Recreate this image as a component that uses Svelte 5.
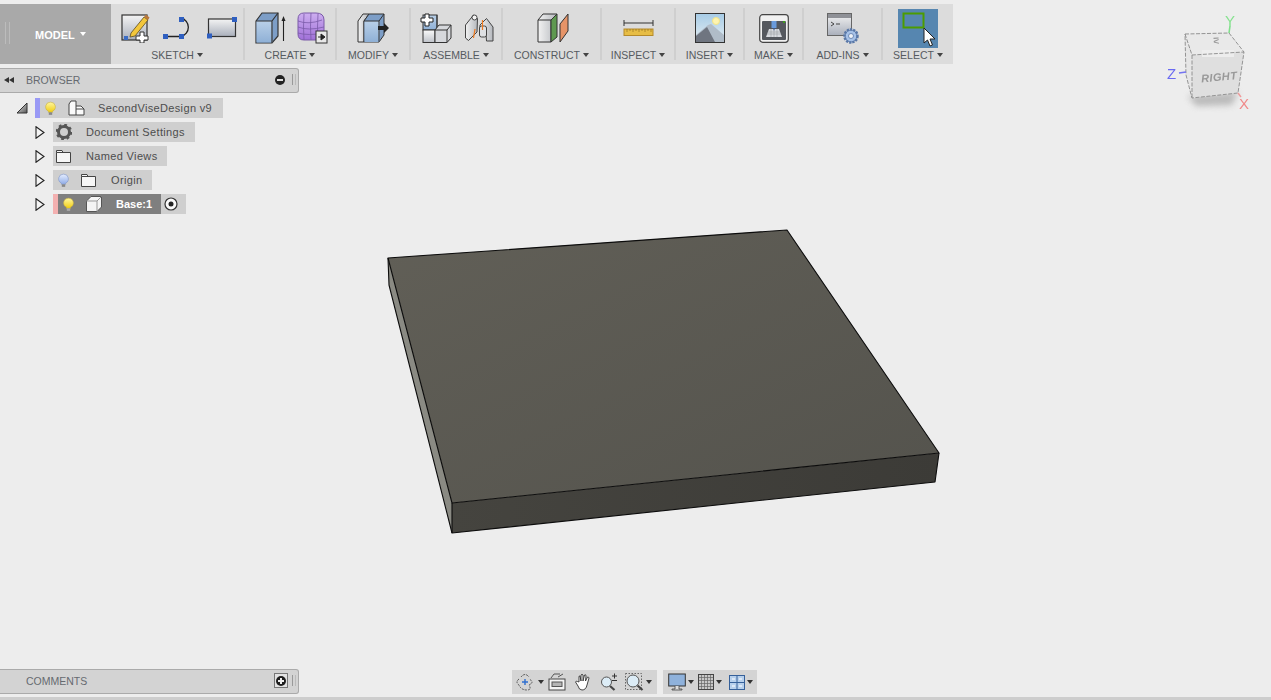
<script>
  const tree = [
    { name: "Document Settings", icon: "gear", w: "w142", gap: "ml14" },
    { name: "Named Views", icon: "folder", w: "w114", gap: "ml15" }
  ];
</script>

<svg class="defs" width="0" height="0" aria-hidden="true">
  <defs>
    <linearGradient id="blue" x1="0" y1="0" x2="0" y2="1"><stop offset="0" stop-color="#b9d0e8"/><stop offset="1" stop-color="#8fb0d6"/></linearGradient>
    <linearGradient id="grey" x1="0" y1="0" x2="0" y2="1"><stop offset="0" stop-color="#fafafa"/><stop offset="1" stop-color="#bfc3ca"/></linearGradient>
    <linearGradient id="sheet" x1="0" y1="0" x2="0" y2="1"><stop offset="0" stop-color="#f4f4f4"/><stop offset="1" stop-color="#a9afbb"/></linearGradient>
    <linearGradient id="side" x1="0" y1="0" x2="1" y2="0"><stop offset="0" stop-color="#f2f2f2"/><stop offset="1" stop-color="#b5b8bd"/></linearGradient>
    <linearGradient id="bulb" x1="0" y1="0" x2="0" y2="1"><stop offset="0" stop-color="#fff7a0"/><stop offset="1" stop-color="#f0cc10"/></linearGradient>
    <linearGradient id="bulboff" x1="0" y1="0" x2="0" y2="1"><stop offset="0" stop-color="#e6eeff"/><stop offset="1" stop-color="#8fabe6"/></linearGradient>
    <linearGradient id="sky" x1="0" y1="0" x2="0" y2="1"><stop offset="0" stop-color="#a7cce6"/><stop offset="1" stop-color="#e6eef2"/></linearGradient>
    <linearGradient id="purple" x1="0" y1="0" x2="0" y2="1"><stop offset="0" stop-color="#cdaef0"/><stop offset="1" stop-color="#a070d8"/></linearGradient>
    <linearGradient id="topface" x1="0" y1="0" x2="1" y2="1"><stop offset="0" stop-color="#615f57"/><stop offset="1" stop-color="#54534d"/></linearGradient>
    <linearGradient id="front" x1="0" y1="0" x2="1" y2="0"><stop offset="0" stop-color="#45443f"/><stop offset="1" stop-color="#3c3b37"/></linearGradient>
    <linearGradient id="arrow" x1="0" y1="0" x2="1" y2="1"><stop offset="0" stop-color="#f0f0f0"/><stop offset="1" stop-color="#555"/></linearGradient>
  </defs>
</svg>

<div class="page">
  <!-- model and view cube sit on the free canvas -->
  <svg class="model" width="1271" height="700" viewBox="0 0 1271 700" aria-hidden="true">
    <polygon points="388,258 452,503 452,533 389,285" fill="#8a8a83"/>
    <polygon points="452,503 939,453 935,482 452,533" fill="url(#front)"/>
    <polygon points="388,258 787,230 939,453 452,503" fill="url(#topface)"/>
    <g fill="none" stroke="#0c0c0c" stroke-width="1.1" stroke-linejoin="round">
      <polygon points="388,258 787,230 939,453 452,503"/>
      <polyline points="939,453 935,482 452,533 452,503"/>
      <polyline points="388,258 389,285 452,533"/>
    </g>
  </svg>

  <svg class="cube" width="100" height="110" viewBox="1160 5 100 110">
    <polygon points="1188,96 1238,92 1232,105 1196,106" fill="#999" opacity=".6" class="blur"/>
    <polygon points="1185,34 1229,33 1244,52 1238,93 1192,98 1186,75" fill="#e6e6e6"/>
    <polygon points="1185,34 1229,33 1244,52 1192,55" fill="#e9e9e9"/>
    <polygon points="1192,55 1244,52 1238,93 1192,98" fill="#dfdfdf"/>
    <rect x="1202" y="50" width="32" height="7" fill="#eeeeee" opacity=".9"/>
    <g fill="none" stroke="#8a8a8a" stroke-width=".9" stroke-dasharray="4 1.5">
      <polygon points="1185,34 1229,33 1244,52 1238,93 1192,98 1186,75"/>
      <polyline points="1185,34 1192,55 1244,52"/>
      <line x1="1192" y1="55" x2="1192" y2="98"/>
    </g>
    <text x="1201" y="81" class="right" transform="rotate(-5 1217 77)">RIGHT</text>
    <text x="1207" y="46" class="top" transform="rotate(176 1213 42)">≥</text>
    <line x1="1229" y1="33" x2="1230" y2="26" stroke="#7fe08a" stroke-width="1.6"/>
    <line x1="1186" y1="72" x2="1179" y2="73" stroke="#7474f0" stroke-width="1.4"/>
    <line x1="1238" y1="93" x2="1241" y2="97" stroke="#f09a9a" stroke-width="1.4"/>
    <text x="1225" y="26" class="axis" fill="#86e28f">Y</text>
    <text x="1167" y="79" class="axis" fill="#6a6af2">Z</text>
    <text x="1239" y="109" class="axis" fill="#f08a8a">X</text>
  </svg>

  <div class="toolbar">
    <div class="mode">
      <span class="grip"></span>
      <span class="modetext">MODEL</span><i class="caret white"></i>
    </div>

    <div class="group">
      <div class="icons sketch">
        <svg width="29" height="30" viewBox="0 0 29 30">
          <rect x="1" y="2" width="25" height="25" fill="url(#sheet)" stroke="#333" stroke-width="1.2"/>
          <path d="M10 20 L23 4 L27 7 L14 23 L9 24 Z" fill="#f3c73c" stroke="#5a4a20" stroke-width=".8"/>
          <path d="M23 4 L25 1.5 L28.5 4.5 L27 7 Z" fill="#b8783c"/>
          <rect x="3" y="23" width="4" height="4" fill="#3b6cc4"/>
          <path d="M19 19 h4 v4 h4 v4 h-4 v3 h-4 v-3 h-4 v-4 h4 z" fill="#fff" stroke="#333"/>
        </svg>
        <svg width="31" height="22" viewBox="0 0 31 22">
          <path d="M2 19.5 H18 A9.5 9.5 0 0 0 18 1 " fill="none" stroke="#222" stroke-width="1.3"/>
          <rect x="0" y="17" width="5" height="5" fill="#2f5fc0"/>
          <rect x="16" y="17" width="5" height="5" fill="#2f5fc0"/>
          <rect x="16" y="0" width="5" height="5" fill="#2f5fc0"/>
        </svg>
        <svg width="30" height="22" viewBox="0 0 30 22">
          <rect x="1.5" y="2" width="27" height="17.5" fill="url(#sheet)" stroke="#333" stroke-width="1.2"/>
          <rect x="25" y="0" width="5" height="5" fill="#2f5fc0"/>
          <rect x="0" y="16.5" width="5" height="5" fill="#2f5fc0"/>
        </svg>
      </div>
      <div class="label">SKETCH<i class="caret"></i></div>
    </div>

    <div class="group">
      <div class="icons create">
        <svg width="32" height="32" viewBox="0 0 32 32">
          <path d="M1 9 L7 1 H23 V24 L17 31 H1 Z" fill="#7d9ec7" stroke="#333" stroke-width="1.2"/>
          <rect x="1.5" y="9" width="16" height="21.5" fill="url(#blue)"/>
          <path d="M1 9 H17 V31 M17 9 L23 1" fill="none" stroke="#333" stroke-width="1.2"/>
          <path d="M28.5 29 V8" stroke="#222" stroke-width="1.1" fill="none"/>
          <path d="M26.5 9 L28.5 4 L30.5 9 Z" fill="#222"/>
        </svg>
        <svg width="31" height="32" viewBox="0 0 31 32">
          <path d="M1 7 Q1 1 7 1 H19 Q27 1 27 8 V22 Q27 28 20 28 H7 Q1 28 1 22 Z" fill="url(#purple)" stroke="#7a5aa8"/>
          <path d="M1 9 Q11 13 25 8 M1 15 Q11 19 27 15 M1 21 Q11 24 27 21 M7 2 Q6 15 7 28 M14 1 Q13 15 14 28 M21 2 Q20 15 21 28" fill="none" stroke="#7a5aa8" stroke-width=".8"/>
          <rect x="19" y="19" width="11" height="12" fill="#e8e8e8" stroke="#333"/>
          <path d="M21 25 H25 M24 22 L28 25 L24 28 Z" stroke="#222" fill="#222"/>
        </svg>
      </div>
      <div class="label">CREATE<i class="caret"></i></div>
    </div>

    <div class="group">
      <div class="icons">
        <svg width="32" height="32" viewBox="0 0 32 32">
          <path d="M1 9 L6 2 H12 L7 9 V30 H1 Z" fill="url(#side)" stroke="#333"/>
          <path d="M7 9 L12 2 H27 V23 L22 30 H7 Z" fill="#7d9ec7" stroke="#333"/>
          <rect x="7.5" y="9" width="15" height="21" fill="url(#blue)"/>
          <path d="M7 9 H22 V30 M22 9 L27 2" fill="none" stroke="#333"/>
          <path d="M21 14 H27 V11 L32 16 L27 21 V18 H21 Z" fill="#222"/>
        </svg>
      </div>
      <div class="label">MODIFY<i class="caret"></i></div>
    </div>

    <div class="group">
      <div class="icons assemble">
        <svg width="32" height="30" viewBox="0 0 32 30">
          <rect x="3" y="2" width="14" height="15" fill="url(#blue)" stroke="#333"/>
          <path d="M17 2 L17 17" stroke="#333"/>
          <rect x="3" y="17" width="12" height="12.5" fill="url(#grey)" stroke="#333"/>
          <path d="M15 17 L19 12 H31 V25 L27 29.5 H15 Z" fill="#d6d8dc" stroke="#333"/>
          <path d="M15 17 H27 V29.5 M27 17 L31 12" fill="none" stroke="#333"/>
          <path d="M5 1 h4 v4 h4 v4 h-4 v4 h-4 v-4 h-4 v-4 h4 z" fill="#fff" stroke="#222"/>
        </svg>
        <svg width="29" height="28" viewBox="0 0 29 28">
          <path d="M.5 11 L8.500 1 L12.500 4.500 L12 18 L3.500 26.500 L.5 24 Z" fill="url(#side)" stroke="#444"/>
          <circle cx="9.500" cy="3.500" r="2.500" fill="#f4f4f4" stroke="#444"/>
          <path d="M15 11 L21.500 4.500 L28 13 V27 H21.500 L21 19 L15 21 Z" fill="url(#side)" stroke="#444"/>
          <rect x="14.500" y="12" width="7" height="11" rx="2" fill="#dfe1e4" stroke="#444"/>
          <path d="M17.500 6 V16 M10 15 L8.500 24" stroke="#f07a1e" stroke-width="1.200" fill="none"/>
        </svg>
      </div>
      <div class="label">ASSEMBLE<i class="caret"></i></div>
    </div>

    <div class="group">
      <div class="icons construct">
        <svg width="32" height="30" viewBox="0 0 32 30">
          <path d="M1 7 L6 1 H20 L14 7 V29 H1 Z" fill="url(#side)" stroke="#333"/>
          <path d="M14 7 L20 1 V24 L14 29 Z" fill="#5f9950" stroke="#333"/>
          <path d="M1 7 H14" stroke="#333"/>
          <path d="M23 11 L31 1 V18 L23 29 Z" fill="#e69468" stroke="#333"/>
        </svg>
      </div>
      <div class="label">CONSTRUCT<i class="caret"></i></div>
    </div>

    <div class="group">
      <div class="icons">
        <svg width="31" height="18" viewBox="0 0 31 18">
          <path d="M1 4 H30 M1 1 V7 M30 1 V7" fill="none" stroke="#333" stroke-width="1"/>
          <rect x="1" y="10" width="29" height="6.5" fill="#e7bd45" stroke="#b58a2a"/>
          <path d="M4 10 V13 M7 10 V12 M10 10 V13 M13 10 V12 M16 10 V13 M19 10 V12 M22 10 V13 M25 10 V12 M28 10 V13" stroke="#8a6a1c" stroke-width=".6"/>
        </svg>
      </div>
      <div class="label">INSPECT<i class="caret"></i></div>
    </div>

    <div class="group">
      <div class="icons">
        <svg width="30" height="30" viewBox="0 0 30 30">
          <rect x=".5" y=".5" width="29" height="29" fill="url(#sky)" stroke="#333"/>
          <circle cx="21" cy="8" r="3.5" fill="#fdf4b0" stroke="#f2e488"/>
          <path d="M1 29 V22 L13 12 L16 11 L29 22 V29 Z" fill="#b0bcc8"/>
          <path d="M1 29 V23 L12 14 L20 29 Z" fill="#6f7580"/>
        </svg>
      </div>
      <div class="label">INSERT<i class="caret"></i></div>
    </div>

    <div class="group">
      <div class="icons">
        <svg width="30" height="29" viewBox="0 0 30 29">
          <rect x=".7" y=".7" width="28.6" height="27.6" rx="3" fill="#f1f1f1" stroke="#444" stroke-width="1.2"/>
          <rect x="3" y="7" width="24" height="19" rx="1" fill="#55585e"/>
          <path d="M7 23 L10 15 H20 L23 23 Z" fill="#d9dbe0"/>
          <path d="M8 20 H22 M9 18 H21 M12 15 V23 M15 15 V23 M18 15 V23" stroke="#8e9097" stroke-width=".5"/>
          <rect x="12.5" y="7" width="5" height="7" fill="#6a9bdc"/>
          <path d="M14 14 L15 17 L16 14 Z" fill="#3a5a90"/>
          <rect x="24" y="7" width="2" height="2" fill="#3f9a20"/>
        </svg>
      </div>
      <div class="label">MAKE<i class="caret"></i></div>
    </div>

    <div class="group">
      <div class="icons">
        <svg width="32" height="31" viewBox="0 0 32 31">
          <rect x=".5" y=".5" width="24" height="22" fill="url(#sheet)" stroke="#666"/>
          <rect x="1" y="1" width="23" height="4" fill="#8f9197"/>
          <path d="M4 9 L7 11 L4 13 M9 11 H13" fill="none" stroke="#333" stroke-width=".9"/>
          <circle cx="24" cy="23" r="6.5" fill="#a7c2e8" stroke="#5a78a8" stroke-width="2.5" stroke-dasharray="2.2 1"/>
          <circle cx="24" cy="23" r="6" fill="none" stroke="#5a78a8" stroke-width=".8"/>
          <circle cx="24" cy="23" r="2.5" fill="#eef2f8" stroke="#5a78a8" stroke-width=".8"/>
        </svg>
      </div>
      <div class="label">ADD-INS<i class="caret"></i></div>
    </div>

    <div class="group last">
      <div class="icons">
        <div class="selectbtn">
          <svg width="40" height="39" viewBox="0 0 40 39">
            <rect x="5.5" y="4.5" width="20" height="14" fill="none" stroke="#4c9c00" stroke-width="2"/>
            <path d="M26 19 L26 34 L29.5 31 L32 37 L34.5 36 L32 30 L37 30 Z" fill="#fff" stroke="#222"/>
          </svg>
        </div>
      </div>
      <div class="label">SELECT<i class="caret"></i></div>
    </div>
  </div>

  <div class="panel browser">
    <span class="rew"><i></i><i></i></span>
    <span class="paneltitle">BROWSER</span>
    <span class="minus"></span>
    <span class="panelgrip"></span>
  </div>

  <div class="tree">
    <div class="treerow">
      <svg class="twist rootarrow" width="12" height="12" viewBox="0 0 12 12"><path d="M1 11 L11 1 V11 Z" fill="url(#arrow)" stroke="#333"/></svg>
      <div class="item w188">
        <span class="stripe purple"></span>
        <svg class="ml5" width="11" height="15" viewBox="0 0 13 17"><path d="M6.5 1 A5.5 5.5 0 0 1 9 11.5 V13 H4 V11.5 A5.5 5.5 0 0 1 6.5 1 Z" fill="url(#bulb)" stroke="#c8b040" stroke-width=".7"/><rect x="4.5" y="13" width="4" height="3" fill="#888"/></svg>
        <svg class="ml12" width="17" height="16" viewBox="0 0 17 16"><path d="M1 4 L3 1 H8 V6 L13 6 L16 9 V15 H1 Z" fill="#fafafa" stroke="#444"/><path d="M8 6 V15 M8 9 H16" stroke="#444" fill="none"/></svg>
        <span class="name ml13">SecondViseDesign v9</span>
      </div>
    </div>

    {#each tree as row}
      <div class="treerow">
        <svg class="twist" width="10" height="13" viewBox="0 0 10 13"><path d="M1 .7 L9 6.5 L1 12.3 Z" fill="#f4f4f4" stroke="#222" stroke-width="1.1"/></svg>
        <div class="item {row.w}">
          {#if row.icon === "gear"}
            <svg class="ml3" width="16" height="16" viewBox="0 0 16 16"><circle cx="8" cy="8" r="5.5" fill="none" stroke="#555" stroke-width="3"/><circle cx="8" cy="8" r="7" fill="none" stroke="#555" stroke-width="2.5" stroke-dasharray="2.7 2.8"/></svg>
          {:else}
            <svg class="ml3" width="15" height="13" viewBox="0 0 15 13"><path d="M.5 2.5 V.5 H6 L7 2.5 H14.5 V12.5 H.5 Z M.5 2.5 H7" fill="#f6f6f6" stroke="#444"/></svg>
          {/if}
          <span class="name {row.gap}">{row.name}</span>
        </div>
      </div>
    {/each}

    <div class="treerow">
      <svg class="twist" width="10" height="13" viewBox="0 0 10 13"><path d="M1 .7 L9 6.5 L1 12.3 Z" fill="#f4f4f4" stroke="#222" stroke-width="1.1"/></svg>
      <div class="item w99">
        <svg class="ml5" width="11" height="15" viewBox="0 0 13 17"><path d="M6.5 1 A5.5 5.5 0 0 1 9 11.5 V13 H4 V11.5 A5.5 5.5 0 0 1 6.5 1 Z" fill="url(#bulboff)" stroke="#7f95c8" stroke-width=".7"/><rect x="4.5" y="13" width="4" height="3" fill="#888"/></svg>
        <svg class="ml12" width="15" height="13" viewBox="0 0 15 13"><path d="M.5 2.5 V.5 H6 L7 2.5 H14.5 V12.5 H.5 Z M.5 2.5 H7" fill="#f6f6f6" stroke="#444"/></svg>
        <span class="name ml15">Origin</span>
      </div>
    </div>

    <div class="treerow">
      <svg class="twist" width="10" height="13" viewBox="0 0 10 13"><path d="M1 .7 L9 6.5 L1 12.3 Z" fill="#f4f4f4" stroke="#222" stroke-width="1.1"/></svg>
      <div class="item w133">
        <span class="stripe pink"></span>
        <div class="selected">
          <svg class="ml5" width="11" height="15" viewBox="0 0 13 17"><path d="M6.5 1 A5.5 5.5 0 0 1 9 11.5 V13 H4 V11.5 A5.5 5.5 0 0 1 6.5 1 Z" fill="url(#bulb)" stroke="#c8b040" stroke-width=".7"/><rect x="4.5" y="13" width="4" height="3" fill="#aaa"/></svg>
          <svg class="ml12" width="16" height="16" viewBox="0 0 16 16"><path d="M.5 5 L5 .5 H15.5 V11 L11 15.5 H.5 Z" fill="#f4f4f4" stroke="#555"/><path d="M.5 5 H11 V15.5 M11 5 L15.5 .5" fill="none" stroke="#999"/></svg>
          <span class="name bold">Base:1</span>
        </div>
        <svg class="ml3" width="14" height="14" viewBox="0 0 14 14"><circle cx="7" cy="7" r="6" fill="#fafafa" stroke="#333" stroke-width="1.2"/><circle cx="7" cy="7" r="2.5" fill="#222"/></svg>
      </div>
    </div>
  </div>

  <div class="bottom">
    <div class="panel comments">
      <span class="paneltitle">COMMENTS</span>
      <span class="plusbox"><span class="plus"></span></span>
      <span class="panelgrip"></span>
    </div>

    <div class="nav">
      <div class="navgroup w145">
        <svg width="21" height="20" viewBox="0 0 21 20"><path d="M6 5 Q10 0 14 5 M4 7 Q0 10 4 13 Q6 18 12 18 Q17 18 14 13 Q20 10 14 7" fill="none" stroke="#555" stroke-dasharray="2 1"/><path d="M10 7 V13 M7 10 H13" stroke="#2f6fd0" stroke-width="1.4"/></svg>
        <i class="caret dark"></i>
        <svg class="ml4" width="18" height="18" viewBox="0 0 18 18"><path d="M3 5 L6 1 H12 M10 4 L15 1" fill="none" stroke="#555"/><rect x="1" y="6" width="16" height="11" fill="#f5f5f5" stroke="#444"/><rect x="4" y="9" width="10" height="4.5" fill="#b5b5b5" stroke="#555"/></svg>
        <svg class="ml8" width="18" height="18" viewBox="0 0 18 18"><path d="M5 9 V4 Q5 2.5 6 3 L7 8 V2 Q8 .5 9 2 V8 L10.5 2 Q12 1 12 3 L11.5 8 L13.5 4 Q15 4 15 5 L13 12 Q12 17 8 17 Q5 17 4 13 L1.5 9 Q2 7.5 3.5 8.5 Z" fill="#fff" stroke="#333" stroke-width=".9"/></svg>
        <svg class="ml8" width="18" height="18" viewBox="0 0 18 18"><circle cx="6.5" cy="9" r="5" fill="#dcecf6" stroke="#555"/><path d="M10 13 L14.5 17" stroke="#444" stroke-width="2.2"/><path d="M12 3 H17 M14.5 .5 V5.5 M12 7.5 H17" stroke="#333"/></svg>
        <svg class="ml7" width="19" height="18" viewBox="0 0 19 18"><rect x=".5" y=".5" width="16" height="16" fill="none" stroke="#666" stroke-dasharray="1.5 1.5"/><circle cx="8" cy="8" r="6" fill="#dcecf6" stroke="#555"/><path d="M12.5 12.5 L17.5 17" stroke="#444" stroke-width="2.2"/></svg>
        <i class="caret dark"></i>
      </div>
      <div class="navgroup w94">
        <svg width="18" height="18" viewBox="0 0 18 18"><rect x=".7" y="1" width="16.6" height="12" fill="#8fb2dc" stroke="#333" stroke-width="1"/><path d="M7 13 V16 H4 V17 H14 V16 H11 V13" fill="#ddd" stroke="#444" stroke-width=".8"/></svg>
        <i class="caret dark"></i>
        <svg class="ml4" width="16" height="16" viewBox="0 0 16 16"><rect x=".5" y=".5" width="15" height="15" fill="#c8c8c8" stroke="#444"/><path d="M3.5 1 V15 M6.5 1 V15 M9.5 1 V15 M12.5 1 V15 M1 3.5 H15 M1 6.5 H15 M1 9.5 H15 M1 12.5 H15" stroke="#666" stroke-width=".7"/></svg>
        <i class="caret dark"></i>
        <svg class="ml7" width="16" height="15" viewBox="0 0 16 15"><rect x=".5" y=".5" width="15" height="14" fill="#b7d0ec" stroke="#35609a"/><path d="M8 1 V14 M1 7.5 H15" stroke="#35609a" stroke-width="1"/><path d="M3 4 H6 M10 4 H13 M3 11 H6 M10 11 H13" stroke="#e8f0fa" stroke-width="1.5"/></svg>
        <i class="caret dark"></i>
      </div>
    </div>
  </div>

  <div class="strip"></div>
</div>

<style>
  :global(body) {
    margin: 0;
    background: #ededed;
  }

  .defs {
    position: absolute;
  }

  .page {
    position: relative;
    width: 1271px;
    height: 700px;
    overflow: hidden;
    display: flex;
    flex-direction: column;
    background: #ededed;
    font-family: "Liberation Sans", Arial, sans-serif;
    color: #555;
  }

  .model {
    position: absolute;
    left: 0;
    top: 0;
  }

  .cube {
    position: absolute;
    left: 1160px;
    top: 5px;
    filter: blur(0.4px);
  }

  .blur {
    filter: blur(3px);
  }

  .right {
    font: italic bold 11px "Liberation Sans", sans-serif;
    fill: #999;
    letter-spacing: 0.4px;
  }

  .top {
    font: bold 10px "Liberation Sans", sans-serif;
    fill: #999;
  }

  .axis {
    font: 15px "Liberation Sans", sans-serif;
  }

  .toolbar {
    position: relative;
    display: grid;
    grid-template-columns: 111px 134px 92px 74px 92px 99px 74px 69px 59px 79px 70px;
    width: 953px;
    height: 60px;
    margin-top: 4px;
    background: #dcdcdc;
  }

  .mode {
    position: relative;
    display: flex;
    align-items: center;
    padding-left: 35px;
    background: #a9a9a9;
  }

  .grip {
    position: absolute;
    left: 5px;
    top: 18px;
    width: 3px;
    height: 22px;
    border-left: 1px solid #bcbcbc;
    border-right: 1px solid #bcbcbc;
  }

  .modetext {
    color: #fff;
    font-size: 11px;
    font-weight: bold;
    margin-top: 2px;
  }

  .caret {
    display: inline-block;
    flex: none;
    width: 0;
    height: 0;
    margin-left: 3px;
    border-left: 3px solid transparent;
    border-right: 3px solid transparent;
    border-top: 4px solid #444;
  }

  .caret.white {
    border-top-color: #fff;
    margin-left: 5px;
  }

  .caret.dark {
    margin-left: 2px;
    border-top-color: #333;
  }

  .group {
    display: flex;
    flex-direction: column;
    height: 52px;
    margin-top: 4px;
    box-sizing: border-box;
    border-right: 2px solid #cfcfcf;
  }

  .group.last {
    border-right: 0;
  }

  .icons {
    display: flex;
    flex: none;
    align-items: center;
    justify-content: center;
    height: 40px;
  }

  .sketch {
    gap: 13px;
    padding-left: 3px;
  }

  .create {
    gap: 10px;
    padding-left: 2px;
  }

  .assemble {
    gap: 13px;
    padding-left: 2px;
  }

  .construct {
    padding-left: 3px;
  }

  .selectbtn {
    display: flex;
    width: 40px;
    height: 39px;
    background: #5686b0;
  }

  .label {
    display: flex;
    flex: none;
    align-items: center;
    justify-content: center;
    height: 14px;
    font-size: 10.5px;
    color: #555a60;
  }

  .panel {
    position: relative;
    display: flex;
    align-items: center;
    width: 299px;
    height: 25px;
    padding-bottom: 2px;
    box-sizing: border-box;
    background: #d3d3d3;
    border: 1px solid #aaa;
    border-left: 0;
    border-radius: 0 3px 3px 0;
  }

  .browser {
    margin-top: 4px;
  }

  .rew {
    display: flex;
    margin-left: 4px;
    width: 22px;
  }

  .rew i {
    width: 0;
    height: 0;
    border-top: 3px solid transparent;
    border-bottom: 3px solid transparent;
    border-right: 5px solid #333;
  }

  .paneltitle {
    font-size: 10.5px;
    color: #666a70;
  }

  .minus {
    position: relative;
    width: 10px;
    height: 10px;
    margin-left: auto;
    margin-right: 7px;
    border-radius: 50%;
    background: #222;
  }

  .minus::after {
    content: "";
    position: absolute;
    left: 2px;
    top: 4px;
    width: 6px;
    height: 2px;
    background: #ddd;
  }

  .panelgrip {
    width: 2px;
    height: 11px;
    margin-right: 2px;
    border-left: 1px solid #999;
    border-right: 1px solid #bbb;
  }

  .tree {
    position: relative;
    display: flex;
    flex-direction: column;
    gap: 4px;
    margin-top: 5px;
  }

  .treerow {
    position: relative;
    display: flex;
    align-items: center;
    height: 20px;
    padding-left: 35px;
  }

  .twist {
    flex: none;
    width: 10px;
    margin-right: 8px;
  }

  .rootarrow {
    position: absolute;
    left: 16px;
    width: 12px;
    margin: 0;
  }

  .item {
    display: flex;
    align-items: center;
    height: 20px;
    flex: none;
    background: #cfcfcf;
  }

  .w188 { width: 188px; }
  .w142 { width: 142px; }
  .w114 { width: 114px; }
  .w99 { width: 99px; }
  .w133 { width: 133px; }
  .w145 { width: 145px; }
  .w94 { width: 94px; }

  .ml3 { margin-left: 3px; }
  .ml4 { margin-left: 4px; }
  .ml5 { margin-left: 5px; }
  .ml7 { margin-left: 7px; }
  .ml8 { margin-left: 8px; }
  .ml12 { margin-left: 12px; }
  .ml13 { margin-left: 13px; }
  .ml14 { margin-left: 14px; }
  .ml15 { margin-left: 15px; }

  .stripe {
    width: 5px;
    height: 20px;
    flex: none;
  }

  .purple {
    background: #9999f5;
  }

  .pink {
    background: #f3b0b0;
  }

  .selected {
    display: flex;
    align-items: center;
    width: 103px;
    height: 20px;
    background: #7f7f7f;
  }

  .name {
    font-size: 11px;
    letter-spacing: 0.35px;
    color: #4d4d4d;
    white-space: nowrap;
  }

  .bold {
    margin-left: 14px;
    color: #fff;
    font-weight: bold;
    letter-spacing: 0;
  }

  .bottom {
    display: flex;
    align-items: flex-start;
    margin-top: auto;
  }

  .comments {
    padding-left: 26px;
  }

  .plusbox {
    display: flex;
    align-items: center;
    justify-content: center;
    width: 14px;
    height: 15px;
    margin-left: auto;
    margin-right: 4px;
    border: 1px solid #777;
    box-sizing: border-box;
    background: #e2e2e2;
  }

  .plus {
    position: relative;
    width: 10px;
    height: 10px;
    border-radius: 50%;
    background: #1c1c1c;
  }

  .plus::before,
  .plus::after {
    content: "";
    position: absolute;
    background: #eee;
  }

  .plus::before {
    left: 2px;
    top: 4px;
    width: 6px;
    height: 2px;
  }

  .plus::after {
    left: 4px;
    top: 2px;
    width: 2px;
    height: 6px;
  }

  .nav {
    display: flex;
    gap: 6px;
    margin-left: 213px;
    margin-top: 1px;
  }

  .navgroup {
    display: flex;
    align-items: center;
    height: 24px;
    padding-left: 3px;
    box-sizing: border-box;
    background: #d4d4d4;
  }

  .navgroup:last-child {
    padding-left: 5px;
  }

  .strip {
    height: 3px;
    margin-top: 3px;
    background: #cdcdcd;
  }
</style>
